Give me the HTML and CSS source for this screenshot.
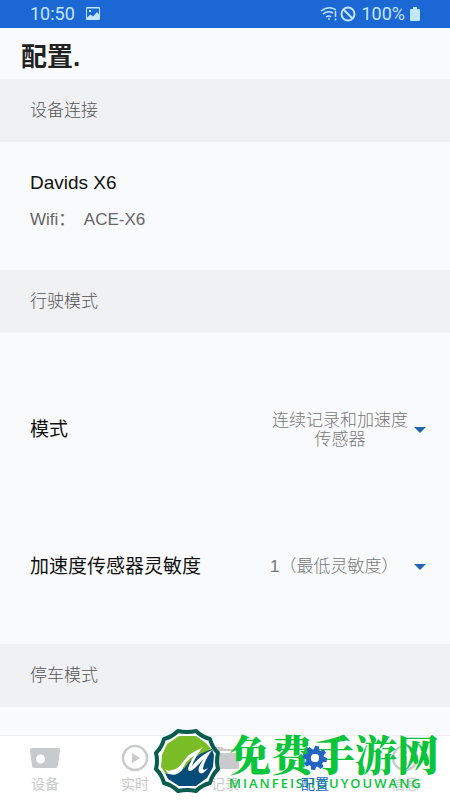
FILE: index.html
```html
<!DOCTYPE html>
<html lang="zh-CN">
<head>
<meta charset="utf-8">
<meta name="viewport" content="width=device-width, initial-scale=1">
<title>配置</title>
<link rel="stylesheet" href="styles.css">
</head>
<body>
<div class="status">
  <span>10:50</span>
  <svg class="photo" width="16" height="16" viewBox="0 0 16 16" aria-hidden="true"><path fill="currentColor" fill-rule="evenodd" d="M2 1h12q1 0 1 1v11q0 1-1 1H2q-1 0-1-1V2q0-1 1-1zM2 11.500 5.500 8.500 8 10.500 12 6l2 2.500V2.500H2zM4 4h2v2H4z"/></svg>
  <div class="status-right">
    <svg width="18" height="16" viewBox="0 0 18 16" fill="none" stroke="currentColor" stroke-width="1.500" aria-hidden="true"><path d="M1 5q8-6 15-1M3 8q5-4 10-1M6 11q3-2 5 0"/><path d="M8 13h2M15.500 5v6M15.500 12.500v2"/></svg>
    <svg width="16" height="16" viewBox="0 0 16 16" fill="none" stroke="currentColor" stroke-width="2" aria-hidden="true"><circle cx="8" cy="8" r="6.500"/><path d="m3.500 3.500 9 9"/></svg>
    <span class="percent">100%</span>
    <svg width="10" height="16" viewBox="0 0 10 16" fill="currentColor" aria-hidden="true"><path d="M3 1h4v2h2q1 0 1 1v10q0 1-1 1H1q-1 0-1-1V4q0-1 1-1h2z"/></svg>
  </div>
</div>
<header class="title"><h1>配置.</h1></header>
<main>
  <h2 class="band">设备连接</h2>
  <section class="device">
    <h3>Davids X6</h3>
    <p>Wifi：  ACE-X6</p>
  </section>
  <h2 class="band">行驶模式</h2>
  <section class="settings">
    <div class="row">
      <label for="mode">模式</label>
      <div class="picker">
        <select id="mode"><option>连续记录和加速度传感器</option></select>
        <svg width="12" height="6" viewBox="0 0 12 6" aria-hidden="true"><path d="M0 0h12L6 6z"/></svg>
      </div>
    </div>
    <div class="row">
      <label for="sensitivity">加速度传感器灵敏度</label>
      <div class="picker">
        <select id="sensitivity"><option>1（最低灵敏度）</option></select>
        <svg width="12" height="6" viewBox="0 0 12 6" aria-hidden="true"><path d="M0 0h12L6 6z"/></svg>
      </div>
    </div>
  </section>
  <h2 class="band">停车模式</h2>
</main>
<nav class="tabs">
  <a href="#device"><svg width="32" height="28" viewBox="0 0 32 28" aria-hidden="true"><path fill="currentColor" fill-rule="evenodd" d="M3 4h26q2 0 2 2l-2 15q-.5 3-3 3H6q-3 0-3-3L1 6q0-2 2-2zM11.500 10.500a4.500 4.500 0 1 0 .1 0z"/></svg>设备</a>
  <a href="#live"><svg width="32" height="28" viewBox="0 0 32 28" aria-hidden="true"><circle cx="16" cy="14" r="12" fill="none" stroke="currentColor" stroke-width="2.500"/><path fill="currentColor" d="m13 9 8 5-8 5z"/></svg>实时</a>
  <a href="#records"><svg width="32" height="28" viewBox="0 0 32 28" aria-hidden="true"><path fill="currentColor" d="M1 3h12l2 2h15v2H1zM1 9h29v14q0 2-2 2H3q-2 0-2-2z"/></svg>记录</a>
  <a href="#settings" class="active" aria-current="page"><svg width="32" height="28" viewBox="0 0 32 28" aria-hidden="true"><g transform="translate(16 14) rotate(10)"><circle r="6.500" fill="none" stroke="currentColor" stroke-width="5"/><g fill="currentColor"><path id="tooth" d="M-3-7-2-12h4l1 5z"/><use href="#tooth" transform="rotate(45)"/><use href="#tooth" transform="rotate(90)"/><use href="#tooth" transform="rotate(135)"/><use href="#tooth" transform="rotate(180)"/><use href="#tooth" transform="rotate(225)"/><use href="#tooth" transform="rotate(270)"/><use href="#tooth" transform="rotate(315)"/></g><circle r="4" fill="#fff"/></g></svg>配置</a>
  <a href="#info"><svg width="32" height="28" viewBox="0 0 32 28" aria-hidden="true"><circle cx="16" cy="14" r="12" fill="none" stroke="currentColor" stroke-width="2.500"/><path fill="currentColor" d="M15 7h3v3h-3zM15 12h3v9h-3z"/></svg>信息</a>
</nav>
<div class="brand">
  <svg width="68" height="66" viewBox="0 0 68 66" aria-hidden="true">
    <path d="M25 3Q34 5 43 3 49 9 57 11 59 19 65 25 63 33 65 41 59 47 57 55 49 57 43 63 34 61 25 63 19 57 11 55 9 47 3 41 5 33 3 25 9 19 11 11 19 9 25 3z" fill="#fff" stroke="#075c50" stroke-width="4" stroke-linejoin="round"/>
    <path d="M26 8H43L53 15 58 21 48 32 30 44 12 45 8 39 9 27 14 16z" fill="#7bbd27"/>
    <path d="M12 45Q27 49 36 34L47 26 59 21 61 27 60 39 54 50 43 58H26L15 51z" fill="#064c78"/>
    <path d="M12 41Q15 44 19 42C26 41 28 36 33 30 37 25 43 23 50 19 45 25 40 34 39 38 44 31 51 26 59 22 54 29 50 37 50 41Q51 43 55 40 50 47 47 45C43 42 48 35 51 31 45 36 40 44 36 43 33 42 38 33 41 28 34 32 31 37 29 42 24 49 15 48 12 41z" fill="#fff"/>
  </svg>
  <div class="brand-text"><strong>免费手游网</strong><span>MIANFEISHOUYOUWANG</span></div>
</div>
</body>
</html>
```
FILE: styles.css
```css
* { box-sizing: border-box; }
body {
  margin: 0;
  min-height: 100vh;
  display: flex;
  flex-direction: column;
  position: relative;
  background: #f9fafc;
  color: #111;
  font-family: "Liberation Sans", "Noto Sans CJK SC", sans-serif;
}
h1, h2, h3, p { margin: 0; font-weight: 400; }
svg { display: block; flex: none; }
.status {
  display: flex;
  align-items: center;
  height: 28px;
  padding: 0 30px;
  background: #1b67d3;
  color: #c3e6ff;
  font: 18px/28px Roboto, sans-serif;
}
.photo { margin-left: 10px; }
.status-right { display: flex; align-items: center; gap: 2px; margin-left: auto; }
.percent { margin: 0 3px; }
.title { padding: 14px 21px 7px; }
.title h1 { font-size: 26px; line-height: 30px; font-weight: 700; color: #222; }
main { flex: 1; }
.band {
  padding: 20px 30px 19px;
  background: #f0f1f3;
  color: #555;
  font-size: 17px;
  line-height: 24px;
  font-weight: 300;
}
.device { padding: 28px 30px 38px; }
.device h3 { font-size: 19px; line-height: 26px; }
.device p { margin-top: 12px; font-size: 17px; line-height: 24px; color: #666; white-space: pre; }
.settings { padding: 28px 24px 9px 30px; }
.row { display: flex; align-items: center; justify-content: space-between; height: 137px; }
.row label { font-size: 19px; line-height: 28px; }
.picker { display: flex; align-items: center; gap: 6px; }
.picker svg { fill: #2464b4; }
.picker select {
  appearance: none;
  width: 136px;
  height: auto;
  padding: 0;
  border: 0;
  background: none;
  color: #777;
  font: 300 17px/19px "Liberation Sans", "Noto Sans CJK SC", sans-serif;
  text-align: center;
  white-space: normal;
}
#sensitivity { width: 138px; text-align: left; }
.tabs { display: flex; height: 65px; padding-top: 8px; background: #fff; border-top: 1px solid #eee; }
.tabs a {
  flex: 1;
  display: flex;
  flex-direction: column;
  align-items: center;
  color: #c9cacc;
  font-size: 14px;
  line-height: 24px;
  text-decoration: none;
}
.tabs .active { position: relative; z-index: 1; color: #2464c4; }
.brand { position: absolute; left: 153px; bottom: 6px; display: flex; align-items: center; gap: 8px; color: #09c53c; }
.brand-text { display: flex; flex-direction: column; padding-top: 2px; }
.brand strong { font: 900 42px/42px "Noto Serif CJK SC", "Noto Sans CJK SC", sans-serif; }
.brand span { font: 600 13px/18px "Open Sans", sans-serif; letter-spacing: 2px; }
```
